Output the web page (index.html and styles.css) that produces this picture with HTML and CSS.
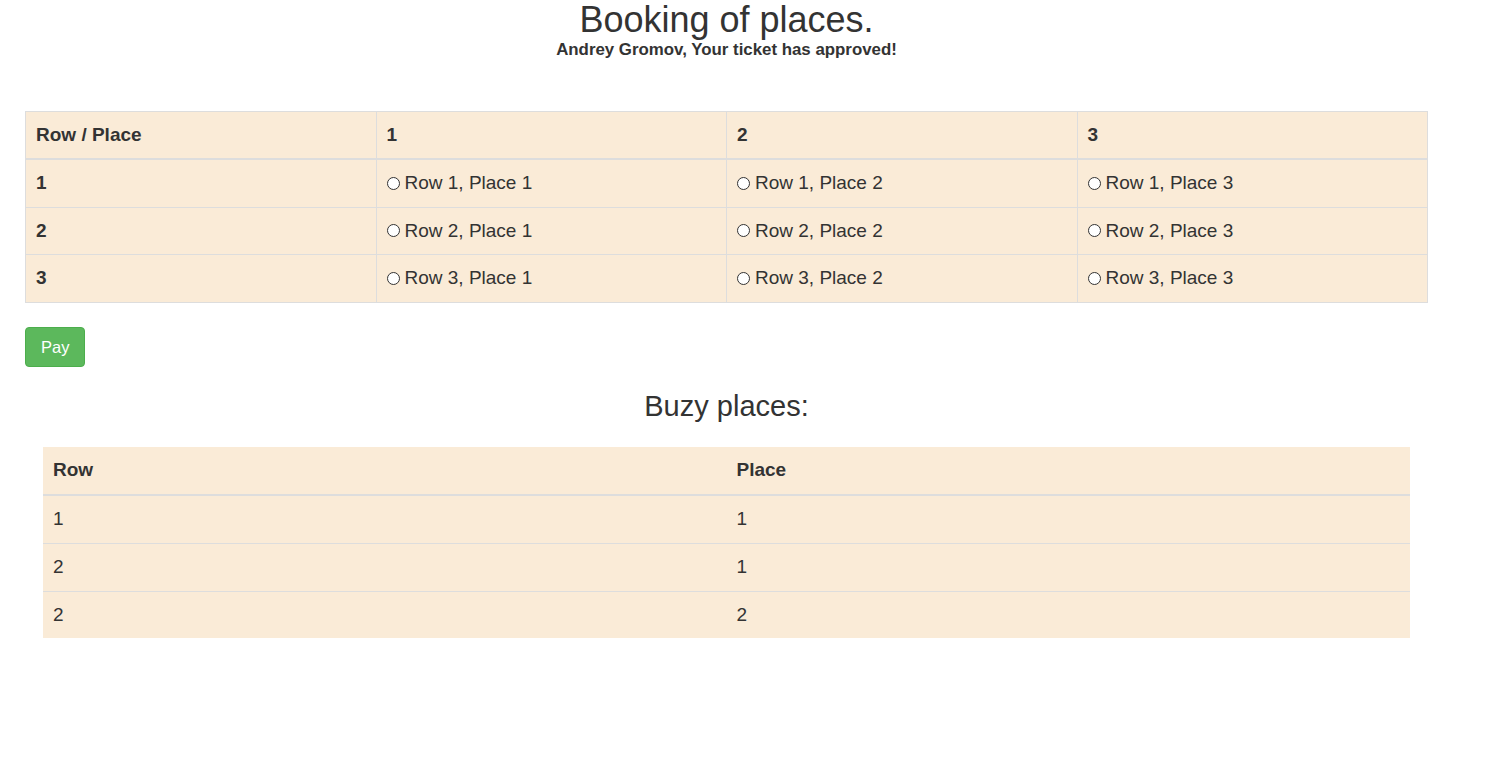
FILE: index.html
```html
<!DOCTYPE html>
<html lang="en">
<head>
<meta charset="utf-8">
<title>Booking of places</title>
<link rel="stylesheet" href="styles.css">
</head>
<body>
<div class="page">
  <h1 class="title">Booking of places.</h1>
  <p class="subtitle">Andrey Gromov, Your ticket has approved!</p>
  <form class="booking">
    <table class="seats">
      <thead>
        <tr><th>Row / Place</th><th>1</th><th>2</th><th>3</th></tr>
      </thead>
      <tbody>
        <tr>
          <th>1</th>
          <td><label class="seat"><input type="radio" name="place" class="radio"> Row 1, Place 1</label></td>
          <td><label class="seat"><input type="radio" name="place" class="radio"> Row 1, Place 2</label></td>
          <td><label class="seat"><input type="radio" name="place" class="radio"> Row 1, Place 3</label></td>
        </tr>
        <tr>
          <th>2</th>
          <td><label class="seat"><input type="radio" name="place" class="radio"> Row 2, Place 1</label></td>
          <td><label class="seat"><input type="radio" name="place" class="radio"> Row 2, Place 2</label></td>
          <td><label class="seat"><input type="radio" name="place" class="radio"> Row 2, Place 3</label></td>
        </tr>
        <tr>
          <th>3</th>
          <td><label class="seat"><input type="radio" name="place" class="radio"> Row 3, Place 1</label></td>
          <td><label class="seat"><input type="radio" name="place" class="radio"> Row 3, Place 2</label></td>
          <td><label class="seat"><input type="radio" name="place" class="radio"> Row 3, Place 3</label></td>
        </tr>
      </tbody>
    </table>
    <button type="button" class="btn-pay">Pay</button>
  </form>
  <h2 class="busy-title">Buzy places:</h2>
  <div class="busy-wrap">
    <table class="busy">
      <thead>
        <tr><th>Row</th><th>Place</th></tr>
      </thead>
      <tbody>
        <tr><td>1</td><td>1</td></tr>
        <tr><td>2</td><td>1</td></tr>
        <tr><td>2</td><td>2</td></tr>
      </tbody>
    </table>
  </div>
</div>
</body>
</html>
```
FILE: styles.css
```css
html, body {
  margin: 0;
  padding: 0;
  background: #ffffff;
}

body {
  font-family: "Liberation Sans", Arial, Helvetica, sans-serif;
  color: #333333;
}

.page {
  width: 1403px;
  margin-left: 25px;
  padding-top: 2px;
}

.title {
  margin: 0;
  font-size: 36px;
  line-height: 36px;
  font-weight: normal;
  text-align: center;
}

.subtitle {
  margin: 2px 0 0;
  font-size: 16.85px;
  line-height: 20px;
  font-weight: bold;
  text-align: center;
}

.booking {
  margin: 51px 0 0;
}

.seats,
.busy {
  width: 100%;
  border-collapse: collapse;
  border-spacing: 0;
  background: #faebd7;
  font-size: 19px;
  line-height: 26px;
  table-layout: fixed;
}

.busy {
  line-height: 26.7px;
}

.seats th,
.seats td,
.busy th,
.busy td {
  padding: 10px;
  text-align: left;
  vertical-align: top;
}

.seats th {
  font-weight: bold;
}

.seats th,
.seats td {
  border: 1px solid #dddddd;
}

.seats thead th {
  border-bottom: 2px solid #dddddd;
}

.seat {
  display: inline-flex;
  align-items: center;
  gap: 5px;
  cursor: pointer;
}

.radio {
  appearance: none;
  -webkit-appearance: none;
  margin: 0;
  width: 13px;
  height: 13px;
  border: 1px solid #333333;
  border-radius: 50%;
  background: #ffffff;
  box-sizing: border-box;
  flex: none;
}

.btn-pay {
  display: block;
  margin-top: 24px;
  padding: 7px 15px;
  font-family: inherit;
  font-size: 16.5px;
  line-height: 24px;
  color: #ffffff;
  background: #5cb85c;
  border: 1px solid #4cae4c;
  border-radius: 4px;
  cursor: pointer;
}

.busy-title {
  margin: 24px 0 0;
  font-size: 29px;
  line-height: 1.1;
  font-weight: normal;
  text-align: center;
}

.busy-wrap {
  margin: 25px 18px 0;
}

.busy th {
  font-weight: bold;
  border-bottom: 2px solid #dddddd;
}

.busy td {
  border-top: 1px solid #dddddd;
}
```
